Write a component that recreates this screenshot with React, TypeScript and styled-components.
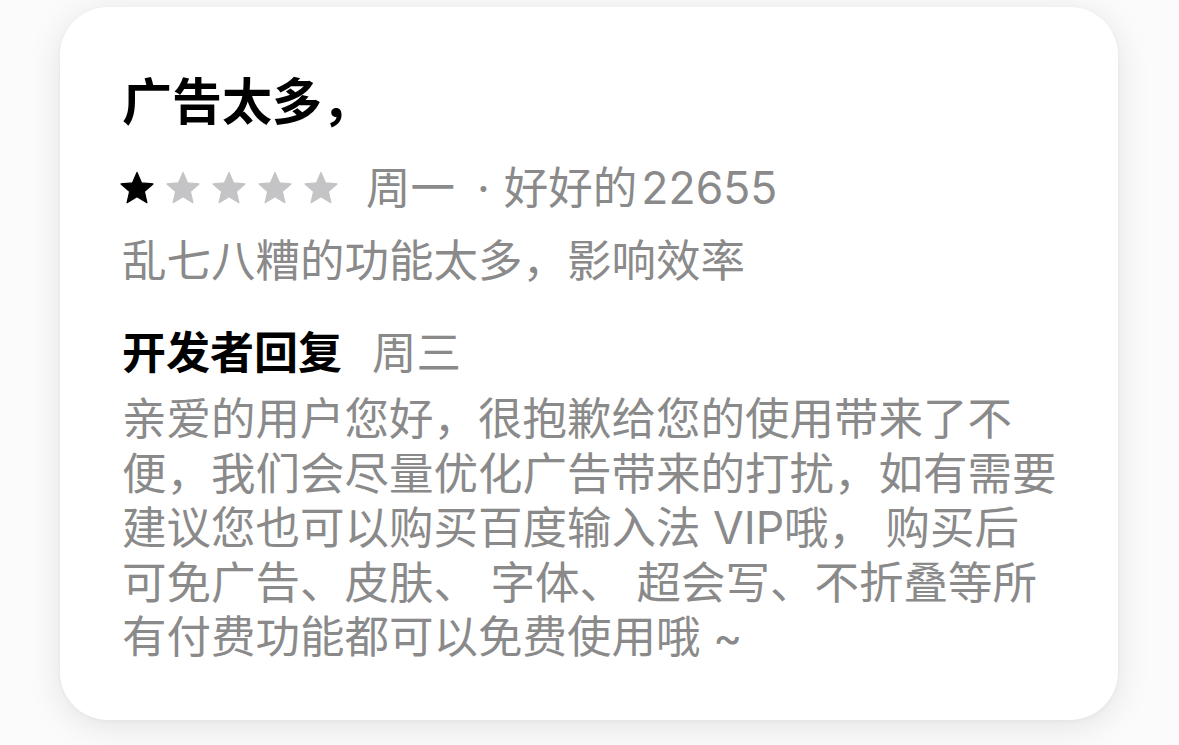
import React from "react";
import styled, { createGlobalStyle } from "styled-components";

const Global = createGlobalStyle`
  html, body { margin: 0; padding: 0; background: #fbfbfb; }
  body { font-family: "Inter", "Noto Sans CJK SC", sans-serif; }
`;

const Page = styled.div`
  width: 1179px;
  height: 745px;
  padding: 7px 0 0 60px;
  box-sizing: border-box;
  display: flex;
  align-items: flex-start;
  overflow: hidden;
`;

const Card = styled.div`
  width: 1058px;
  height: 713px;
  box-sizing: border-box;
  background: #ffffff;
  border-radius: 48px;
  box-shadow: 0 6px 34px rgba(0, 0, 0, 0.1), 0 1px 4px rgba(0, 0, 0, 0.04);
  padding: 62px 30px 0 62px;
  display: flex;
  flex-direction: column;
  font-size: 44.5px;
  line-height: 54px;
`;

const Title = styled.div`
  color: #000;
  font-weight: 700;
  font-size: 50px;
  line-height: 58px;
  font-family: "Noto Sans CJK SC", sans-serif;
`;

const RatingRow = styled.div`
  margin-top: 34px;
  display: flex;
  align-items: center;
  height: 54px;
`;

const Stars = styled.div`
  display: flex;
  gap: 10px;
  margin-left: -3px;
`;

const Meta = styled.span`
  margin-left: 27px;
  color: #8a8a8a;
`;

const Dot = styled.span`
  margin: 0 14px 0 22px;
`;

const Num = styled.span`
  margin-left: 4px;
`;

const Comment = styled.div`
  margin-top: 19px;
  color: #8a8a8a;
`;

const ReplyHead = styled.div`
  margin-top: 35px;
  display: flex;
  align-items: baseline;
`;

const ReplyLabel = styled.span`
  color: #000;
  font-weight: 700;
  font-size: 44px;
  font-family: "Noto Sans CJK SC", sans-serif;
`;

const ReplyDate = styled.span`
  margin-left: 30px;
  color: #8a8a8a;
`;

const ReplyBody = styled.div`
  margin-top: 12px;
  color: #8a8a8a;
  line-height: 54.5px;
  white-space: nowrap;
`;

const Line = styled.div``;

const Star = ({ filled }: { filled: boolean }) => (
  <svg width="36" height="36" viewBox="0 0 24 24">
    <path
      d="M12 1.6l3.05 7.02 7.6.68-5.76 5.02 1.72 7.44L12 17.85l-6.61 3.91 1.72-7.44L1.35 9.3l7.6-.68z"
      fill={filled ? "#000" : "#c4c4c6"}
      stroke={filled ? "#000" : "#c4c4c6"}
      strokeWidth="0.8"
      strokeLinejoin="round"
    />
  </svg>
);

const lines = [
  "亲爱的用户您好，很抱歉给您的使用带来了不",
  "便，我们会尽量优化广告带来的打扰，如有需要",
  "建议您也可以购买百度输入法 VIP哦， 购买后",
  "可免广告、皮肤、 字体、 超会写、不折叠等所",
  "有付费功能都可以免费使用哦 ~",
];

export default function App() {
  return (
    <>
      <Global />
      <Page>
        <Card>
          <Title>广告太多，</Title>
          <RatingRow>
            <Stars>
              {[0, 1, 2, 3, 4].map((i) => (
                <Star key={i} filled={i === 0} />
              ))}
            </Stars>
            <Meta>
              周一<Dot>·</Dot>好好的<Num>22655</Num>
            </Meta>
          </RatingRow>
          <Comment>乱七八糟的功能太多，影响效率</Comment>
          <ReplyHead>
            <ReplyLabel>开发者回复</ReplyLabel>
            <ReplyDate>周三</ReplyDate>
          </ReplyHead>
          <ReplyBody>
            {lines.map((l) => (
              <Line key={l}>{l}</Line>
            ))}
          </ReplyBody>
        </Card>
      </Page>
    </>
  );
}
